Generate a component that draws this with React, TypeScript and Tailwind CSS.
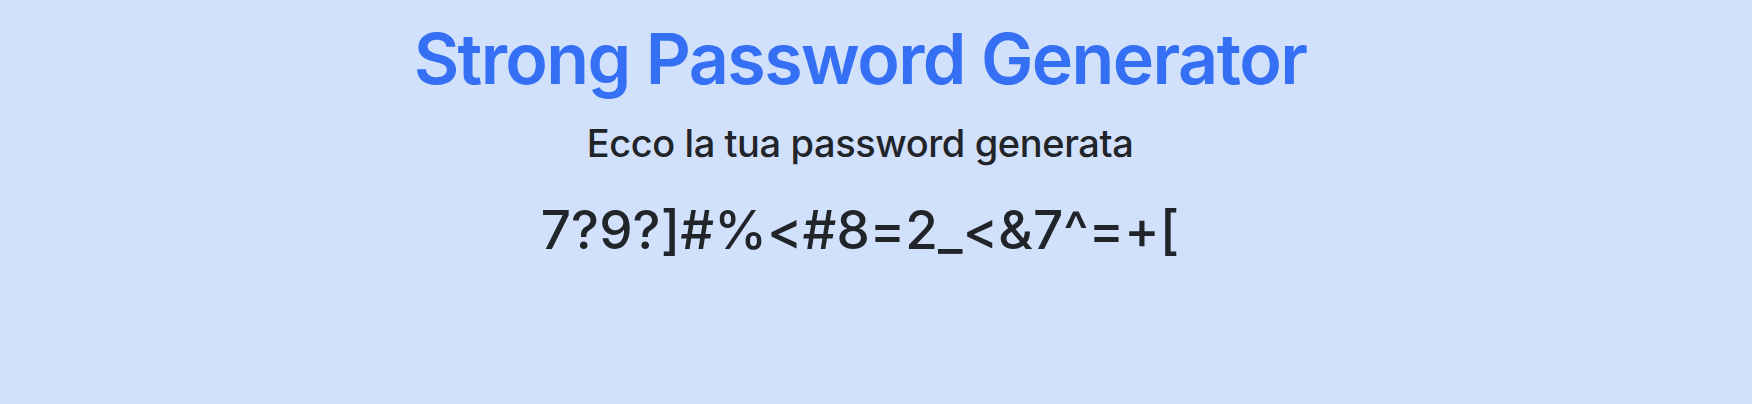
export default function App() {
  return (
    <div className="min-h-[404px] w-full bg-[#d2e1fb] pr-[32px] flex flex-col items-center text-center" style={{ fontFamily: "Inter, 'Noto Sans', sans-serif" }}>
      <h1 className="text-[70px] leading-none font-semibold tracking-[-1.6px] text-[#346ff4] mt-[24px]">Strong Password Generator</h1>
      <h2 className="text-[38px] leading-none font-medium tracking-[-0.4px] text-[#212529] mt-[30px]">Ecco la tua password generata</h2>
      <div className="text-[53px] leading-none font-medium tracking-[0.1px] text-[#212529] mt-[42px]">7?9?]#%&lt;#8=2_&lt;&amp;7^=+[</div>
    </div>
  );
}
